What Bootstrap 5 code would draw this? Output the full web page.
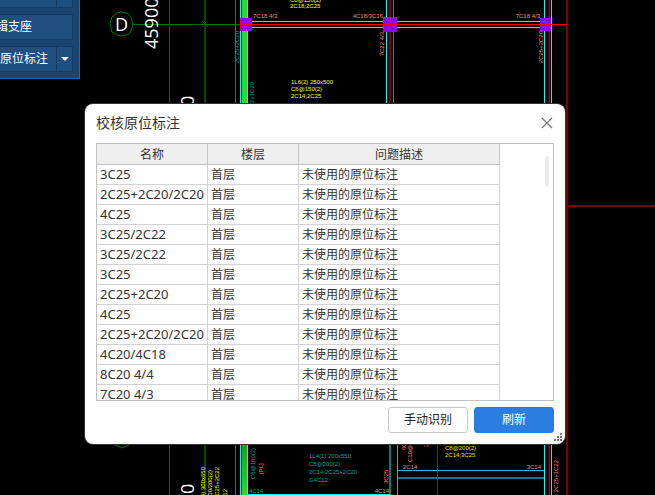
<!DOCTYPE html>
<html lang="zh-CN">
<head>
<meta charset="utf-8">
<meta name="viewport" content="width=device-width, initial-scale=1">
<title>校核原位标注</title>
<link href="https://cdn.jsdelivr.net/npm/bootstrap@5.3.0/dist/css/bootstrap.min.css" rel="stylesheet">
<style>
body{background:#000;color:#333;font-family:"Noto Sans","Noto Sans CJK SC",sans-serif;font-size:12px;line-height:20px}
.workspace{background:#000}
.drawing{left:0;top:0;font-family:"Liberation Sans",sans-serif;font-size:6px}
.drawing .axis-text{font-family:"Open Sans",sans-serif;font-size:18px;fill:#fff}
.tool-panel{left:-32px;top:-25px;width:112px;padding:6px;gap:6px;background:#1a4472;border:1px solid #2968a8}
.tool-panel .btn{height:26px;padding:0;border:1px solid #143a62;border-radius:0;background:#1f4f80;color:#fff;font-size:12px;line-height:24px;white-space:nowrap;text-align:left}
.tool-panel .btn-drop{width:17px;flex:none;margin-left:-1px}
.check-dialog{left:85px;top:104px;width:480px;padding:9px 11px 11px;background:#fff;border-radius:8px;box-shadow:0 0 0 1px #333}
.dialog-title{font-size:14px;line-height:20px;color:#333}
.close-btn{width:14px;height:14px;color:#777}
.result-box{height:258px;margin-top:10px;border:1px solid #c0c0c0}
.result-grid{width:403px;table-layout:fixed;border-collapse:separate;border-spacing:0;color:#333}
.result-grid th{height:21px;padding:2px 0 0;background:#efefef;border-right:1px solid #c4c4c4;border-bottom:1px solid #c4c4c4;font-weight:400;text-align:center;line-height:18px}
.result-grid td{height:20px;padding:0 3px;border-right:1px solid #d2d2d2;border-bottom:1px solid #d2d2d2;line-height:19px;white-space:nowrap}
.result-grid td:first-child{font-size:13px}
.col-name{width:111px}
.col-floor{width:91px}
.scroll-thumb{right:4px;top:12px;width:4px;height:31px;border-radius:2px;background:#ebebeb}
.dialog-actions{gap:6px;margin-top:6px}
.dialog-actions .btn{width:80px;height:26px;padding:0;border-radius:3px;font-size:12px;line-height:24px}
.dialog-actions .btn-plain{border:1px solid #c8c8c8;background:#fff;color:#222}
.dialog-actions .btn-refresh{border:1px solid #2b7de1;background:#2b7de1;color:#fff}
.size-grip{right:3px;bottom:3px}
</style>
<script src="https://cdn.jsdelivr.net/npm/bootstrap@5.3.0/dist/js/bootstrap.bundle.min.js"></script>
</head>
<body>
<main class="workspace position-relative vh-100 overflow-hidden">
<svg class="drawing position-absolute" width="655" height="495" viewBox="0 0 655 495" aria-label="梁平面图">
  <defs><linearGradient id="beam" x1="0" y1="0" x2="0" y2="1"><stop offset="0" stop-color="#1b9a1b"/><stop offset="1" stop-color="#30d830"/></linearGradient></defs>
  <g fill="none" shape-rendering="crispEdges">
    <path stroke="#007000" d="M169.500 0V495M133 24.500H246"/>
    <path stroke="#004a00" stroke-width="2" d="M205 0V495"/>
    <path stroke="#008080" d="M235.500 0V495"/>
    <path stroke="#0ff" d="M240.500 0V495M247.500 0V495"/>
    <path stroke="#0ff" d="M248 21.500H545M248 27.500H545"/>
    <path stroke="#0ff" d="M386.500 0V110M544.500 0V495M551.500 0V495"/>
    <path stroke="#00a0a0" d="M393.500 0V110"/>
    <path stroke="#800000" stroke-width="2" d="M390 0V110"/>
    <path stroke="#c00000" d="M549.500 0V495"/>
    <path stroke="#500000" d="M548.500 0V495"/>
    <path stroke="#7c0000" stroke-width="2" d="M567 0V495M566 206H655"/>
    <path stroke="#900000" d="M564 379.500H567"/>
    <path stroke="#008080" stroke-width="2" d="M390 440V495M397 478H544"/>
    <path stroke="#0cc" d="M397.500 440V495M397 470.500H544"/>
    <path stroke="#0ff" d="M248 494.500H390"/>
    <path stroke="#c00000" d="M437.500 440V495"/>
  </g>
  <path fill="#2fd62b" d="M242 0h5v110h-5z"/>
  <path fill="url(#beam)" d="M242 440h5v55h-5z"/>
  <path fill="#8f00ff" d="M240 18h12v13h-12zM383 17h14v15h-14zM540 18h11v13h-11z"/>
  <path stroke="#f00" fill="none" shape-rendering="crispEdges" d="M240.500 19V30M241 24.500H567"/>
  <g fill="none" stroke="#007800"><path d="M117 13l-5 4-2 7 2 8 5 3 5 1 7-2 3-6 1-4-2-7-4-4-6-1zM202 21l6 6"/><path d="M113 444l9 4 9-4"/></g>
  <g class="axis-text"><text x="115" y="31">D</text><text transform="translate(158 49) rotate(-90)">45900</text><text transform="translate(194 106) rotate(-90)">0</text><text transform="translate(194 494) rotate(-90)">0</text></g>
  <g fill="#ff8080">
    <text x="253" y="18">7C18 4/3</text><text x="383" y="18" text-anchor="end">4C18/3C16</text><text x="540" y="18" text-anchor="end">7C18 4/3</text>
    <text x="403" y="469">2C14</text><text x="541" y="469" text-anchor="end">3C14</text><text x="389" y="493" text-anchor="end">4C14</text>
    <text transform="translate(388 484) rotate(-90)">3C25</text><text transform="translate(412 462) rotate(-90)">C10@100</text><text transform="translate(263 474) rotate(-90)">[PL]</text>
    <text transform="translate(406 450) rotate(-90)">6C12</text><text transform="translate(428 447) rotate(-90)">3C25</text>
    <g text-anchor="end"><text transform="translate(384 32) rotate(-90)">7C22 4/3</text><text transform="translate(543 31) rotate(-90)">2C25+2C20</text><text transform="translate(558 460) rotate(-90)">2C25+1C22</text></g>
  </g>
  <g fill="#ff0">
    <text x="290" y="2">C8@150(2)</text><text x="290" y="8">2C18;2C25</text>
    <text x="291" y="84">1L6(2) 250x500</text><text x="291" y="91">C6@150(2)</text><text x="291" y="98">2C14;2C25</text>
    <g text-anchor="end"><text transform="translate(205 467) rotate(-90)">1L2(6) 300x650</text><text transform="translate(212 470) rotate(-90)">C10@100/200(2)</text><text transform="translate(219 467) rotate(-90)">2C25;2C25+2C22</text><text transform="translate(227 489) rotate(-90)">G4C12</text></g>
  </g>
  <g fill="#e0e000"><text x="445" y="450">C8@200(2)</text><text x="445" y="457">2C14;3C25</text></g>
  <g fill="#00a0a0">
    <text text-anchor="end" transform="translate(239 31) rotate(-90)">2C25+2C20</text><text text-anchor="end" transform="translate(254 82) rotate(-90)">2C22+1C20</text>
    <text x="309" y="458">1L4(1) 200x550</text><text x="309" y="466">C8@200(2)</text><text x="309" y="474">2C14;2C25+2C20</text><text x="309" y="482">G4C12</text>
    <text transform="translate(255 479) rotate(-90)">C8@100(2)</text><text x="249" y="493">4C14</text>
  </g>
</svg>

<aside class="tool-panel position-absolute d-flex flex-column" aria-label="梁二次编辑">
  <div class="d-flex"><button type="button" class="btn flex-grow-1 ps-3">识别梁</button><button type="button" class="btn btn-drop" aria-label="更多识别选项"></button></div>
  <button type="button" class="btn ps-2">编辑支座</button>
  <div class="d-flex"><button type="button" class="btn flex-grow-1">校核原位标注</button><button type="button" class="btn btn-drop" aria-label="更多校核选项"><svg class="d-block mx-auto" width="8" height="4"><path fill="#fff" d="M0 0h8L4 4z"/></svg></button></div>
</aside>

<section class="check-dialog position-absolute" role="dialog" aria-labelledby="dialog-title">
  <header class="d-flex align-items-center justify-content-between">
    <h1 id="dialog-title" class="dialog-title fw-normal m-0">校核原位标注</h1>
    <button type="button" class="close-btn btn p-0 border-0 d-flex align-items-center justify-content-center" aria-label="关闭"><svg width="12" height="12" viewBox="0 0 12 12"><path d="M1 1l10 10M11 1L1 11" stroke="currentColor" stroke-width="1.200"/></svg></button>
  </header>
  <div class="result-box position-relative overflow-hidden">
    <table class="result-grid">
      <colgroup><col class="col-name"><col class="col-floor"><col></colgroup>
      <thead><tr><th scope="col">名称</th><th scope="col">楼层</th><th scope="col">问题描述</th></tr></thead>
      <tbody>
        <tr><td>3C25</td><td>首层</td><td>未使用的原位标注</td></tr>
        <tr><td>2C25+2C20/2C20</td><td>首层</td><td>未使用的原位标注</td></tr>
        <tr><td>4C25</td><td>首层</td><td>未使用的原位标注</td></tr>
        <tr><td>3C25/2C22</td><td>首层</td><td>未使用的原位标注</td></tr>
        <tr><td>3C25/2C22</td><td>首层</td><td>未使用的原位标注</td></tr>
        <tr><td>3C25</td><td>首层</td><td>未使用的原位标注</td></tr>
        <tr><td>2C25+2C20</td><td>首层</td><td>未使用的原位标注</td></tr>
        <tr><td>4C25</td><td>首层</td><td>未使用的原位标注</td></tr>
        <tr><td>2C25+2C20/2C20</td><td>首层</td><td>未使用的原位标注</td></tr>
        <tr><td>4C20/4C18</td><td>首层</td><td>未使用的原位标注</td></tr>
        <tr><td>8C20 4/4</td><td>首层</td><td>未使用的原位标注</td></tr>
        <tr><td>7C20 4/3</td><td>首层</td><td>未使用的原位标注</td></tr>
      </tbody>
    </table>
    <span class="scroll-thumb position-absolute"></span>
  </div>
  <footer class="dialog-actions d-flex justify-content-end">
    <button type="button" class="btn btn-plain">手动识别</button>
    <button type="button" class="btn btn-refresh">刷新</button>
  </footer>
  <svg class="size-grip position-absolute" width="8" height="8" fill="#777" aria-hidden="true"><path d="M6 0h2v2H6zM3 3h2v2H3zM6 3h2v2H6zM0 6h2v2H0zM3 6h2v2H3zM6 6h2v2H6z"/></svg>
</section>
</main>
</body>
</html>
